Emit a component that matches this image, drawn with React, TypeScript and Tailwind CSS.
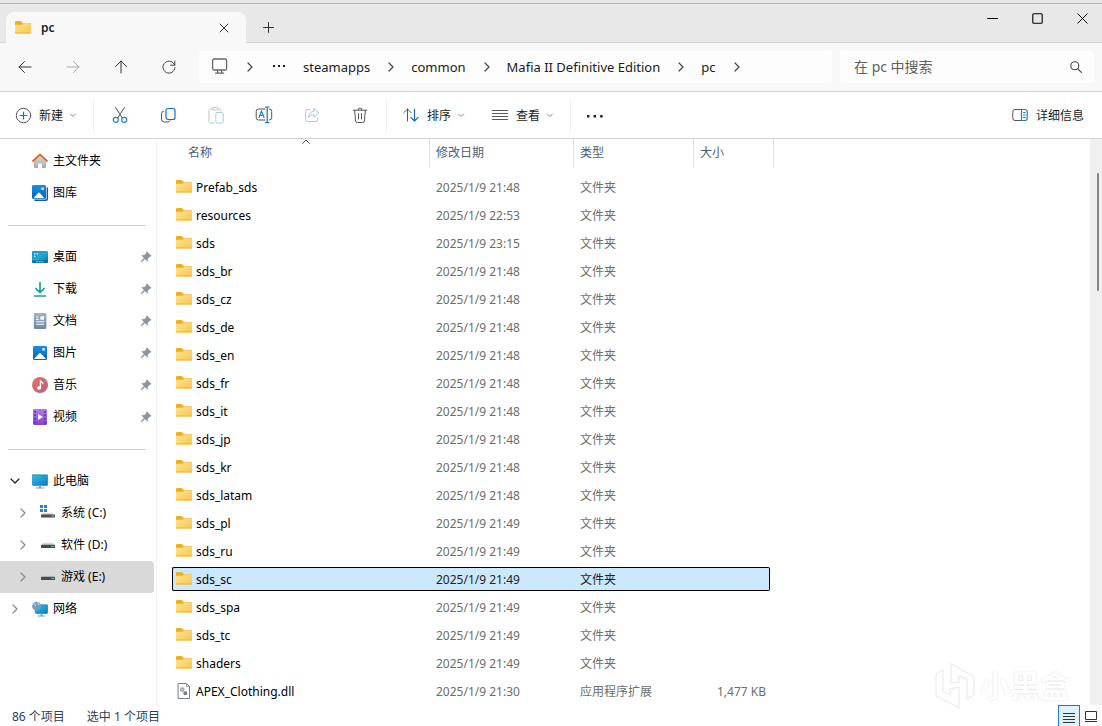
import { useState, type ReactNode } from 'react'
import clsx from 'clsx'

type IconProps = { size?: number; className?: string; children: ReactNode }

const Icon = ({ size = 16, className, children }: IconProps) => (
  <svg
    width={size}
    height={size}
    viewBox={`0 0 ${size} ${size}`}
    fill="none"
    stroke="currentColor"
    strokeLinecap="round"
    strokeLinejoin="round"
    className={clsx('shrink-0', className)}
    aria-hidden="true"
  >
    {children}
  </svg>
)

const Gradients = () => (
  <svg width="0" height="0" className="absolute" aria-hidden="true">
    <defs>
      <linearGradient id="folder" x1="0" y1="0" x2="1" y2="1">
        <stop offset="0" stopColor="#ffe394" />
        <stop offset="1" stopColor="#fcc748" />
      </linearGradient>
      <linearGradient id="blue" x1="0" y1="0" x2="0" y2="1">
        <stop offset="0" stopColor="#1a8fe0" />
        <stop offset="1" stopColor="#0a62b5" />
      </linearGradient>
      <linearGradient id="screen" x1="0" y1="0" x2="1" y2="1">
        <stop offset="0" stopColor="#2fc3e8" />
        <stop offset="1" stopColor="#0f78c0" />
      </linearGradient>
      <linearGradient id="teal" x1="0" y1="0" x2="1" y2="1">
        <stop offset="0" stopColor="#1597c2" />
        <stop offset="0.5" stopColor="#1fa9d4" />
        <stop offset="1" stopColor="#0b6fa8" />
      </linearGradient>
      <linearGradient id="music" x1="0" y1="0" x2="1" y2="1">
        <stop offset="0" stopColor="#e8795a" />
        <stop offset="1" stopColor="#b45a93" />
      </linearGradient>
      <linearGradient id="video" x1="0" y1="0" x2="0" y2="1">
        <stop offset="0" stopColor="#b07aec" />
        <stop offset="1" stopColor="#8443d6" />
      </linearGradient>
      <linearGradient id="doc" x1="0" y1="0" x2="0" y2="1">
        <stop offset="0" stopColor="#9fb4c9" />
        <stop offset="1" stopColor="#6f88a3" />
      </linearGradient>
      <linearGradient id="house" x1="0" y1="0" x2="0" y2="1">
        <stop offset="0" stopColor="#dcdcdf" />
        <stop offset="1" stopColor="#a7a8ad" />
      </linearGradient>
    </defs>
  </svg>
)

const FolderIcon = () => (
  <Icon>
    <g stroke="none">
      <path d="M0 2a1 1 0 0 1 1-1h4.6a1 1 0 0 1 .8.4L7.8 3H15a1 1 0 0 1 1 1v2H0z" fill="#eeb01c" />
      <path d="M0 5.8a1 1 0 0 1 1-1h4.8a2 2 0 0 0 1.2-.4l.9-.9a1 1 0 0 1 .6-.2H15a1 1 0 0 1 1 1v8.2a1 1 0 0 1-1 1H1a1 1 0 0 1-1-1z" fill="url(#folder)" />
      <path d="M.6 13h14.8" stroke="#e8b43c" strokeWidth="1" />
    </g>
  </Icon>
)

const DllIcon = () => (
  <Icon>
    <path d="M2.5.5h8l3 3v12h-11z" fill="#fff" stroke="#7d7d7d" />
    <path d="M10.5.5v3h3" stroke="#9a9a9a" />
    <circle cx="6.3" cy="6.6" r="1.7" fill="#c3c8ce" stroke="#9aa0a8" strokeWidth="1.2" />
    <circle cx="9.3" cy="10.2" r="1.4" fill="#9aa0a8" stroke="#6a727c" strokeWidth="1.2" />
  </Icon>
)

const HomeIcon = () => (
  <Icon>
    <path d="M2 7.5 8 2l6 5.5V14a1 1 0 0 1-1 1h-3v-4.5H6V15H3a1 1 0 0 1-1-1z" fill="url(#house)" stroke="none" />
    <path d="M1 8 8 1.5 15 8" stroke="#dd6f2e" strokeWidth="1.9" />
  </Icon>
)

const GalleryIcon = () => (
  <Icon>
    <g stroke="none">
      <path d="M14 2.2h.8A1.2 1.2 0 0 1 16 3.4V14a2 2 0 0 1-2 2H3.4a1.2 1.2 0 0 1-1.2-1.2V14z" fill="#0b5cab" />
      <rect width="14.6" height="14.6" rx="1.4" fill="#fff" />
      <rect width="14" height="14" rx="1.4" fill="url(#blue)" />
      <path d="m1.5 13.2 4.6-5.3a1.2 1.2 0 0 1 1.8 0l4.6 5.3z" fill="#fff" />
      <circle cx="10.6" cy="3.8" r="1.3" fill="#fff" />
    </g>
  </Icon>
)

const DesktopIcon = () => (
  <Icon>
    <g stroke="none">
      <rect y="2" width="16" height="12" rx="1.2" fill="url(#teal)" />
      <path d="M2 4h1.4v1.4H2zM2 6.7h1.4v1.4H2zM4.8 4h1.4v1.4H4.8z" fill="#d6f4ff" />
      <path d="M0 11.5h16v1.3a1.2 1.2 0 0 1-1.2 1.2H1.2A1.2 1.2 0 0 1 0 12.8z" fill="#0d6e9c" />
      <path d="M4.5 12.8h1.2m1.4 0h1.2m1.4 0h1.2" stroke="#9fe3ff" strokeWidth=".8" />
    </g>
  </Icon>
)

const DownloadIcon = () => (
  <Icon>
    <path d="M8 1.5v10M3.8 7.5 8 11.7l4.2-4.2M2.5 15h11" stroke="#1da388" strokeWidth="1.7" />
  </Icon>
)

const DocumentIcon = () => (
  <Icon>
    <rect x="1.8" width="12.6" height="16" rx="1.3" fill="url(#doc)" stroke="none" />
    <path d="M4.2 4h2.4M4.2 6.4h2.4M4.2 8.8h7.8M4.2 11.2h7.8" stroke="#fff" strokeWidth="1.1" strokeLinecap="butt" />
    <rect x="8.4" y="3.3" width="3.6" height="3.4" fill="#fff" stroke="none" />
  </Icon>
)

const PictureIcon = () => (
  <Icon>
    <g stroke="none">
      <rect x="1" y="1" width="14" height="14" rx="1.2" fill="url(#blue)" />
      <path d="m2 14 5-5.5a1.2 1.2 0 0 1 1.8 0L14 14z" fill="#fff" />
      <circle cx="11.6" cy="4.4" r="1.3" fill="#fff" />
    </g>
  </Icon>
)

const MusicIcon = () => (
  <Icon>
    <circle cx="8" cy="8" r="8" fill="url(#music)" stroke="none" />
    <ellipse cx="7" cy="11" rx="2" ry="1.7" fill="#fff" stroke="none" />
    <path d="M8.4 11V3.8c.6 1 2 1.2 2.4 2.6" stroke="#fff" strokeWidth="1.3" />
  </Icon>
)

const VideoIcon = () => (
  <Icon>
    <rect x="1" y="0" width="14" height="16" rx="1.3" fill="url(#video)" stroke="none" />
    <path d="M3 2v13M13 2v13" stroke="#4a1a8c" strokeWidth="1.4" strokeDasharray="1.4 2.2" strokeLinecap="butt" />
    <path d="M6 5v6l5-3z" fill="#fff" stroke="none" />
  </Icon>
)

const ComputerIcon = () => (
  <Icon>
    <rect x=".3" y="1.8" width="15.4" height="10.6" rx="1" fill="url(#screen)" stroke="#1574a8" strokeWidth=".6" />
    <path d="M8 12.5v2.4" stroke="#8fa0ad" strokeWidth="2" strokeLinecap="butt" />
    <path d="M4.5 15h7" stroke="#7f95a5" />
  </Icon>
)

const SystemDriveIcon = () => (
  <Icon>
    <g stroke="none">
      <path d="M0 0h3v3H0zM4 0h3v3H4zM0 4h3v3H0zM4 4h3v3H4z" fill="#1a86cc" />
      <path d="M2.5 8h10l2 2H1z" fill="#d3d5d8" />
      <rect x="1" y="9.4" width="14" height="3.2" rx=".6" fill="#4a4f55" />
      <path d="M11.6 11h2" stroke="#4ce0b0" strokeWidth="1" />
    </g>
  </Icon>
)

const DriveIcon = () => (
  <Icon>
    <g stroke="none">
      <path d="M3 5.8h10l1.8 2.4H1.2z" fill="#d3d5d8" />
      <rect x="1" y="7.8" width="14" height="3.2" rx=".6" fill="#454a50" />
      <path d="M11.6 9.4h2" stroke="#4ce0b0" strokeWidth="1" />
    </g>
  </Icon>
)

const NetworkIcon = () => (
  <Icon>
    <rect x="3.3" y="3.8" width="12.4" height="8.6" rx=".8" fill="url(#screen)" stroke="#12699f" strokeWidth=".6" />
    <path d="M9.5 12.5V15" stroke="#8fa0ad" strokeWidth="1.8" strokeLinecap="butt" />
    <path d="M6.5 15h6" stroke="#4e9fd0" />
    <circle cx="4.6" cy="5.2" r="4.4" fill="#6d9fc0" stroke="none" />
    <path d="M2 2.8c1.4.2 1.8 1 1.2 1.9M5.6 1.6c-.2 1.2.6 1.6 1.6 1.8" stroke="#d7e8f2" strokeWidth="1" />
  </Icon>
)

const PinIcon = () => (
  <Icon size={12} className="text-[#8d959c]">
    <path d="M7 .8 11.2 5l-1.4.6-2 2-.3 2.6L5 7.8 1.6 11l-.6-.6L4.2 7 1.8 4.5l2.6-.3 2-2z" fill="currentColor" strokeWidth=".6" />
  </Icon>
)

const Chevron = ({ className }: { className?: string }) => (
  <Icon size={10} className={className}>
    <path d="m3 1 4 4-4 4" strokeWidth="1.2" />
  </Icon>
)

const CaretDown = () => (
  <Icon size={8} className="text-[#8a8a8a]">
    <path d="m1.5 3 2.5 2.5L6.5 3" />
  </Icon>
)

const Watermark = () => (
  <div className="pointer-events-none absolute right-8 bottom-4 flex items-center gap-1">
    <svg width="42" height="48" viewBox="0 0 42 48" fill="#fff" stroke="#e8e8e8" strokeWidth="1" aria-hidden="true">
      <path d="m2 12 7-4v21l7 4v-6l9-2v21L2 34z" />
      <path d="m17 1.5 23 13.5v18l-7 4V17l-8-3v6l-8 1z" />
    </svg>
    <span className="text-[30px] leading-9 font-bold text-white [text-shadow:0_0_2px_#d8d8d8]">小黑盒</span>
  </div>
)

type NavItem = {
  label: string
  icon: ReactNode
  pinned?: boolean
  expand?: 'open' | 'closed'
  child?: boolean
}

const quickItems: NavItem[] = [
  { label: '主文件夹', icon: <HomeIcon /> },
  { label: '图库', icon: <GalleryIcon /> },
]

const pinnedItems: NavItem[] = [
  { label: '桌面', icon: <DesktopIcon />, pinned: true },
  { label: '下载', icon: <DownloadIcon />, pinned: true },
  { label: '文档', icon: <DocumentIcon />, pinned: true },
  { label: '图片', icon: <PictureIcon />, pinned: true },
  { label: '音乐', icon: <MusicIcon />, pinned: true },
  { label: '视频', icon: <VideoIcon />, pinned: true },
]

const deviceItems: NavItem[] = [
  { label: '此电脑', icon: <ComputerIcon />, expand: 'open' },
  { label: '系统 (C:)', icon: <SystemDriveIcon />, expand: 'closed', child: true },
  { label: '软件 (D:)', icon: <DriveIcon />, expand: 'closed', child: true },
  { label: '游戏 (E:)', icon: <DriveIcon />, expand: 'closed', child: true },
  { label: '网络', icon: <NetworkIcon />, expand: 'closed' },
]

type FileRow = { name: string; date: string; type: string; size?: string }

const folder = (name: string, time: string): FileRow => ({ name, date: `2025/1/9 ${time}`, type: '文件夹' })

const files: FileRow[] = [
  folder('Prefab_sds', '21:48'),
  folder('resources', '22:53'),
  folder('sds', '23:15'),
  folder('sds_br', '21:48'),
  folder('sds_cz', '21:48'),
  folder('sds_de', '21:48'),
  folder('sds_en', '21:48'),
  folder('sds_fr', '21:48'),
  folder('sds_it', '21:48'),
  folder('sds_jp', '21:48'),
  folder('sds_kr', '21:48'),
  folder('sds_latam', '21:48'),
  folder('sds_pl', '21:49'),
  folder('sds_ru', '21:49'),
  folder('sds_sc', '21:49'),
  folder('sds_spa', '21:49'),
  folder('sds_tc', '21:49'),
  folder('shaders', '21:49'),
  { name: 'APEX_Clothing.dll', date: '2025/1/9 21:30', type: '应用程序扩展', size: '1,477 KB' },
]

const crumbs = ['steamapps', 'common', 'Mafia II Definitive Edition', 'pc']

const TitleBar = () => (
  <header className="flex h-[39px] bg-[#e8e8e8]">
    <div className="w-1.5 border-b border-[#d2d2d2]" />
    <div className="mt-2 flex w-60 items-center rounded-t-lg bg-[#f8f8f8] pr-3.5 pl-[9px]">
      <FolderIcon />
      <span className="ml-2.5 flex-1 text-xs font-semibold text-[#1b1b1b]">pc</span>
      <button type="button" aria-label="关闭标签页" className="flex size-4 items-center justify-center text-[#333]">
        <Icon size={10}><path d="m1 1 8 8M9 1 1 9" /></Icon>
      </button>
    </div>
    <div className="flex flex-1 items-start justify-between border-b border-[#d2d2d2] pl-2">
      <button type="button" aria-label="新建标签页" className="mt-2 flex size-7 items-center justify-center self-center text-[#333]">
        <Icon size={11}><path d="M5.5.5v10M.5 5.5h10" /></Icon>
      </button>
      <div className="flex gap-[5px] text-black">
        <button type="button" aria-label="最小化" className="flex h-7 w-10 items-center justify-center">
          <Icon size={11}><path d="M.5 5.5h10" /></Icon>
        </button>
        <button type="button" aria-label="最大化" className="flex h-7 w-10 items-center justify-center">
          <Icon size={11}><rect x=".8" y=".8" width="9.4" height="9.4" rx="1" strokeWidth="1.1" /></Icon>
        </button>
        <button type="button" aria-label="关闭" className="flex h-7 w-10 items-center justify-center">
          <Icon size={11}><path d="m.8.8 9.4 9.4m0-9.4L.8 10.2" /></Icon>
        </button>
      </div>
    </div>
  </header>
)

const AddressBar = () => (
  <div className="flex items-center border-b border-[#d2d2d2] bg-[#f8f8f8] py-2 pr-2 pl-1">
    <button type="button" aria-label="后退" className="flex h-8 w-[42px] items-center justify-center text-[#333]">
      <Icon><path d="M14 8H2M7.5 2.5 2 8l5.5 5.5" /></Icon>
    </button>
    <button type="button" aria-label="前进" className="ml-1.5 flex h-8 w-[42px] items-center justify-center text-[#a8a8a8]">
      <Icon><path d="M2 8h12M8.5 2.5 14 8l-5.5 5.5" /></Icon>
    </button>
    <button type="button" aria-label="向上" className="ml-1.5 flex h-8 w-[42px] items-center justify-center text-[#333]">
      <Icon><path d="M8 14V2M2.5 7.5 8 2l5.5 5.5" /></Icon>
    </button>
    <button type="button" aria-label="刷新" className="ml-1.5 flex h-8 w-[42px] items-center justify-center text-[#444]">
      <Icon><path d="M13.7 6.2A6 6 0 1 0 14 8.6M13.8 2v4.2H9.6" /></Icon>
    </button>

    <nav aria-label="地址" className="ml-[9px] flex h-8 min-w-0 flex-1 items-center rounded bg-[#fdfdfd] pl-3 text-[#1b1b1b]">
      <Icon size={18} className="text-[#666]">
        <rect x="1.6" y="1" width="14" height="11" rx="1.6" strokeWidth="1.3" />
        <path d="M6.6 12.4v2.2M10.6 12.4v2.2M4.6 15.2h8" strokeWidth="1.3" />
      </Icon>
      <Chevron className="ml-4 text-[#444]" />
      <button type="button" aria-label="更多路径" className="ml-[18px]">
        <Icon size={12}>
          <path d="M0 4h2v2H0zM5 4h2v2H5zM10 4h2v2h-2z" fill="currentColor" stroke="none" />
        </Icon>
      </button>
      <ol className="ml-[18px] flex items-center text-[13px] leading-5">
        {crumbs.map((crumb) => (
          <li key={crumb} className="flex items-center">
            <button type="button" className="whitespace-nowrap">{crumb}</button>
            <Chevron className="mr-[15px] ml-4 text-[#444]" />
          </li>
        ))}
      </ol>
    </nav>

    <label className="ml-2 flex h-8 w-[254px] items-center rounded bg-[#fdfdfd] pr-3 pl-3.5">
      <input
        type="search"
        aria-label="搜索"
        placeholder="在 pc 中搜索"
        className="w-0 flex-1 bg-transparent text-sm text-[#1b1b1b] outline-none placeholder:text-[#606060]"
      />
      <Icon size={12} className="text-[#444]">
        <circle cx="4.8" cy="4.8" r="4" strokeWidth="1.1" />
        <path d="m7.8 7.8 3.6 3.6" strokeWidth="1.2" />
      </Icon>
    </label>
  </div>
)

const ToolButton = ({ label, disabled, children }: { label: string; disabled?: boolean; children: ReactNode }) => (
  <button
    type="button"
    aria-label={label}
    disabled={disabled}
    className={clsx('flex h-8 w-12 items-center justify-center', disabled ? 'text-[#b9c3cb]' : 'text-[#555]')}
  >
    {children}
  </button>
)

const Separator = () => <div className="h-8 w-px bg-[#ececec]" />

const Toolbar = () => (
  <div className="flex items-center border-b border-[#d2d2d2] bg-white py-[7px] text-xs text-[#1b1b1b]">
    <button type="button" className="flex h-8 items-center pr-4 pl-[15px]">
      <Icon size={17} className="text-[#555]">
        <circle cx="8.5" cy="8.5" r="7.2" />
        <path d="M8.5 5v7M5 8.5h7" stroke="#1574b8" strokeWidth="1.2" />
      </Icon>
      <span className="mr-1.5 ml-[7px] pt-0.5">新建</span>
      <CaretDown />
    </button>
    <Separator />
    <div className="mx-0.5 flex">
      <ToolButton label="剪切">
        <Icon size={18}>
          <path d="M4.6 1.5 11.3 12M13.4 1.5 6.7 12" />
          <circle cx="4.8" cy="13.8" r="2.5" stroke="#1d82cf" strokeWidth="1.2" />
          <circle cx="13.2" cy="13.8" r="2.5" stroke="#1d82cf" strokeWidth="1.2" />
        </Icon>
      </ToolButton>
      <ToolButton label="复制">
        <Icon>
          <rect x="6" y="1.5" width="9" height="11" rx="2" stroke="#1472b8" strokeWidth="1.2" />
          <path d="M3.6 4.2A2.4 2.4 0 0 0 1.5 6.6v5.2A3 3 0 0 0 4.5 15h3.3a2.4 2.4 0 0 0 2.2-1.4" />
        </Icon>
      </ToolButton>
      <ToolButton label="粘贴" disabled>
        <Icon size={18}>
          <path d="M5 3H3.6A1.6 1.6 0 0 0 2 4.6v10.8A1.6 1.6 0 0 0 3.6 17H7M11 3h1.4A1.6 1.6 0 0 1 14 4.6V5" />
          <rect x="5" y="1.5" width="6" height="2.6" rx="1.2" />
          <rect x="8.8" y="6.5" width="7.4" height="10.5" rx="1.4" stroke="#a5cbe6" />
        </Icon>
      </ToolButton>
      <ToolButton label="重命名">
        <Icon size={18}>
          <path d="M10 3H3.6A2.4 2.4 0 0 0 1.2 5.4v6.2A2.4 2.4 0 0 0 3.6 14H10M14.5 3a2.2 2.2 0 0 1 2.2 2.4v6.2a2.2 2.2 0 0 1-2.2 2.4" />
          <path d="m4 11.5 2.5-6.6L9 11.5M4.9 9.3h3.2" stroke="#1d82cf" strokeWidth="1.2" />
          <path d="M12.2 1.2v15.2M10.4 1h3.6M10.4 16.6h3.6" stroke="#1574b8" strokeWidth="1.2" />
        </Icon>
      </ToolButton>
      <ToolButton label="共享" disabled>
        <Icon>
          <path d="M6 2.5H3.6a2 2 0 0 0-2 2v8a2 2 0 0 0 2 2h8a2 2 0 0 0 2-2V11" />
          <path d="M10 1.6 14.8 6 10 10.2V7.8C7.4 7.6 5.8 8.6 4.6 10.4 4.8 6.8 6.8 4.4 10 4z" stroke="#9cc8e6" />
        </Icon>
      </ToolButton>
      <ToolButton label="删除">
        <Icon>
          <path d="M1.2 3.2h13.6M6 3a2 2 0 0 1 4 0M2.6 3.4l1 10.6a1.6 1.6 0 0 0 1.6 1.5h5.6a1.6 1.6 0 0 0 1.6-1.5l1-10.6M6.5 6.5v5.5M9.5 6.5v5.5" />
        </Icon>
      </ToolButton>
    </div>
    <Separator />
    <button type="button" className="flex h-8 items-center pr-3 pl-4">
      <Icon className="text-[#555]">
        <path d="M4.5 14V2M.8 5.7 4.5 2l3.7 3.7" />
        <path d="M11.5 2v12M7.8 10.3l3.7 3.7 3.7-3.7" stroke="#1472b8" strokeWidth="1.2" />
      </Icon>
      <span className="mr-1.5 ml-2 pt-0.5">排序</span>
      <CaretDown />
    </button>
    <button type="button" className="ml-[15px] flex h-8 items-center pr-4">
      <Icon className="text-[#555]">
        <path d="M.5 3.5h15M.5 6.5h15M.5 9.5h15M.5 12.5h15" />
      </Icon>
      <span className="mr-1.5 ml-2 pt-0.5">查看</span>
      <CaretDown />
    </button>
    <Separator />
    <button type="button" aria-label="更多选项" className="flex h-8 w-12 items-center justify-center">
      <Icon>
        <path d="M0 8h2.4v2.4H0zM6.6 8H9v2.4H6.6zM13.2 8h2.4v2.4h-2.4z" fill="currentColor" stroke="none" />
      </Icon>
    </button>
    <button type="button" className="mr-[18px] ml-auto flex h-8 items-center gap-2">
      <Icon className="text-[#555]">
        <path d="M9.5 2.5H3a2.2 2.2 0 0 0-2.2 2.2v6.6A2.2 2.2 0 0 0 3 13.5h6.5" />
        <path d="M9.5 2.5H13a2.2 2.2 0 0 1 2.2 2.2v6.6a2.2 2.2 0 0 1-2.2 2.2H9.5zM11.5 5.5h1.6M11.5 8h1.6M11.5 10.5h1.6" stroke="#1d82cf" strokeWidth="1.2" />
      </Icon>
      <span className="pt-0.5">详细信息</span>
    </button>
  </div>
)

type NavRowProps = { item: NavItem; active: boolean; onSelect: (label: string) => void }

const NavRow = ({ item, active, onSelect }: NavRowProps) => (
  <li className="mr-0.5">
    <button
      type="button"
      onClick={() => onSelect(item.label)}
      className={clsx(
        'flex h-8 w-full items-center rounded-r-sm pr-0.5',
        item.child ? 'pl-4' : 'pl-2',
        active && 'bg-[#d9d9d9]'
      )}
    >
      <span className="flex w-6 items-center pl-0.5">
        {item.expand && (
          <Chevron className={item.expand === 'open' ? 'rotate-90 text-[#222]' : 'text-[#8a8a8a]'} />
        )}
      </span>
      {item.icon}
      <span className="ml-[5px]">{item.label}</span>
      {item.pinned && <span className="ml-auto"><PinIcon /></span>}
    </button>
  </li>
)

const NavDivider = () => (
  <li className="flex h-8 items-center pr-2.5 pl-2">
    <hr className="flex-1 border-[#cfcfcf]" />
  </li>
)

const Sidebar = () => {
  const [active, setActive] = useState('游戏 (E:)')
  const row = (item: NavItem) => (
    <NavRow key={item.label} item={item} active={active === item.label} onSelect={setActive} />
  )

  return (
    <aside className="w-[157px] shrink-0 border-r border-[#f0f0f0] pt-1.5 text-xs text-black">
      <ul>
        {quickItems.map(row)}
        <NavDivider />
        {pinnedItems.map(row)}
        <NavDivider />
        {deviceItems.map(row)}
      </ul>
    </aside>
  )
}

const headCell = 'flex h-7 w-full items-center border-r border-[#e2e2e2] text-left font-normal'

const FileTable = () => {
  const [selected, setSelected] = useState('sds_sc')

  return (
    <table className="w-[602px] table-fixed border-collapse text-xs">
      <colgroup>
        <col className="w-[258px]" />
        <col className="w-36" />
        <col className="w-[120px]" />
        <col className="w-20" />
      </colgroup>
      <thead className="text-[#4c607a]">
        <tr className="h-[34px] align-top">
          <th scope="col" aria-sort="ascending" className="relative p-0">
            <button type="button" className={clsx(headCell, 'pl-4')}>名称</button>
            <Icon size={10} className="absolute top-0 left-1/2 text-[#555]">
              <path d="M1.5 4.5 5 1l3.5 3.5" />
            </Icon>
          </th>
          <th scope="col" className="p-0">
            <button type="button" className={clsx(headCell, 'pl-1.5')}>修改日期</button>
          </th>
          <th scope="col" className="p-0">
            <button type="button" className={clsx(headCell, 'pl-1.5')}>类型</button>
          </th>
          <th scope="col" className="p-0">
            <button type="button" className={clsx(headCell, 'pl-1.5')}>大小</button>
          </th>
        </tr>
      </thead>
      <tbody>
        {files.map((file) => {
          const on = file.name === selected
          const cell = clsx(
            'flex h-6 items-center border-y',
            on ? 'border-black bg-[#cce8ff] text-[#222]' : 'border-transparent text-[#6d6d6d]'
          )

          return (
            <tr key={file.name} className="h-7 cursor-default" aria-selected={on} onClick={() => setSelected(file.name)}>
              <td className="p-0">
                <div className={clsx(cell, 'gap-1 rounded-l-xs border-l pl-[3px]')}>
                  {file.size ? <DllIcon /> : <FolderIcon />}
                  <span className="pt-0.5 text-black">{file.name}</span>
                </div>
              </td>
              <td className="p-0"><div className={clsx(cell, 'pt-0.5 pl-1.5')}>{file.date}</div></td>
              <td className="p-0"><div className={clsx(cell, 'pt-0.5 pl-1.5')}>{file.type}</div></td>
              <td className="p-0">
                <div className={clsx(cell, 'mr-1 justify-end rounded-r-xs border-r pt-0.5 pr-[3px]')}>{file.size}</div>
              </td>
            </tr>
          )
        })}
      </tbody>
    </table>
  )
}

const StatusBar = () => (
  <footer className="flex h-[21px] items-center bg-white pl-3 text-xs text-[#2b3f5c]">
    <span className="pt-0.5">86 个项目</span>
    <span className="ml-[22px] pt-0.5">选中 1 个项目</span>
    <div className="ml-auto flex self-stretch">
      <button type="button" aria-label="详细信息视图" className="flex w-[22px] items-center justify-center border border-b-0 border-[#1c7fb6] bg-[#dff2fc] text-[#333]">
        <Icon size={12} className="mt-1">
          <path d="M0 1.5h12M0 4.5h12M0 7.5h12M0 10.5h12" strokeLinecap="butt" />
        </Icon>
      </button>
      <button type="button" aria-label="大图标视图" className="flex w-[22px] items-center justify-center text-[#333]">
        <Icon size={12}>
          <path d="M.5 1.5h11v8H.5zM0 11.5h12" strokeLinejoin="miter" strokeLinecap="butt" />
        </Icon>
      </button>
    </div>
  </footer>
)

const App = () => (
  <div className="relative flex min-h-screen flex-col bg-white font-['Noto_Sans','Noto_Sans_CJK_SC',sans-serif]">
    <Gradients />
    <div className="h-1 border-b border-[#b4b4b4] bg-[#e6e6e6]" />
    <TitleBar />
    <AddressBar />
    <Toolbar />
    <div className="flex flex-1">
      <Sidebar />
      <main className="min-w-0 flex-1 pl-[15px]">
        <FileTable />
      </main>
      <div className="w-3 bg-[#f0f0f0] pt-[34px] pl-[7px]">
        <div className="h-[118px] w-0.5 rounded-full bg-[#868686]" />
      </div>
    </div>
    <StatusBar />
    <Watermark />
  </div>
)

export default App
